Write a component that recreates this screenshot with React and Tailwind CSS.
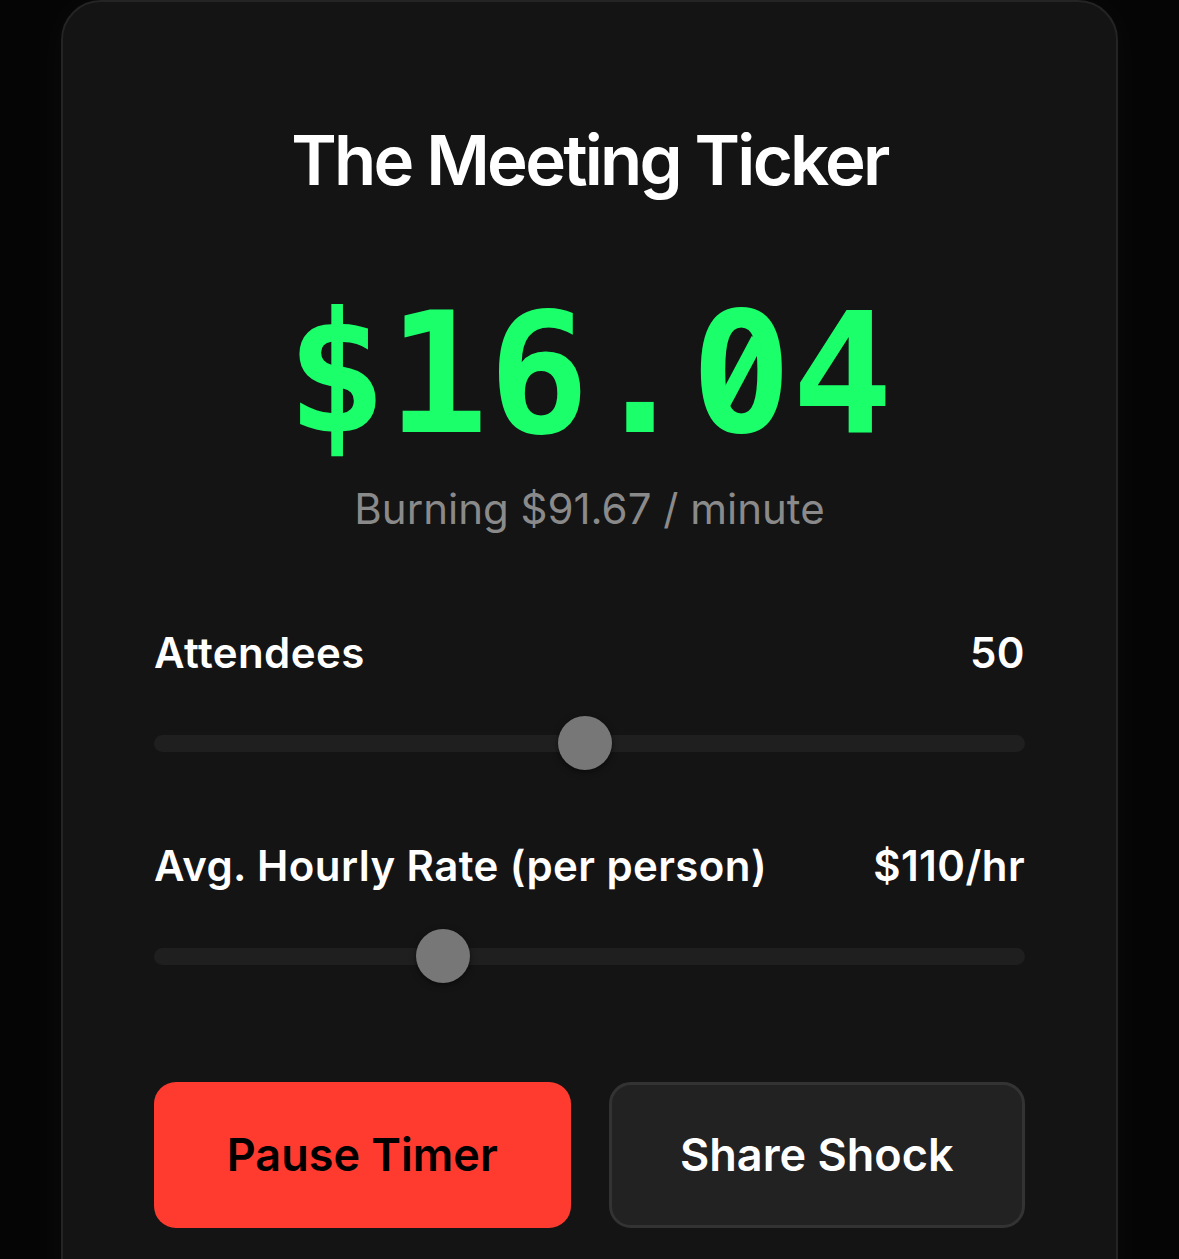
import React from "react";

function Slider({ pct }) {
  return (
    <div className="relative h-[54px] flex items-center">
      <div className="w-full h-[17px] rounded-full bg-[#1f1f1f]" />
      <div
        className="absolute top-0 w-[54px] h-[54px] rounded-full bg-[#777777] shadow-[0_2px_6px_rgba(0,0,0,0.5)]"
        style={{ left: `calc((100% - 54px) * ${pct})` }}
      />
    </div>
  );
}

function SlashedZero() {
  return (
    <span className="relative inline-block">
      0
      <span className="absolute left-1/2 top-[72px] -translate-x-1/2 -translate-y-1/2 w-[30px] h-[46px] rounded-full bg-[#141414]" />
      <span className="absolute left-1/2 top-[72px] -translate-x-1/2 -translate-y-1/2 w-[14px] h-[72px] bg-[#1aff6a] rotate-[28deg]" />
    </span>
  );
}

export default function App() {
  return (
    <div
      className="w-[1179px] h-[1259px] overflow-hidden bg-[#050505] flex justify-center"
      style={{ fontFamily: "Inter, 'Noto Sans', sans-serif" }}
    >
      <div className="w-[1057px] h-[1320px] bg-[#141414] border-2 border-[#242424] rounded-[40px] shadow-[0_0_40px_rgba(255,255,255,0.03)] px-[91px] pt-[118px] flex flex-col">
        <h1 className="text-center text-white text-[69px] leading-[80px] font-semibold tracking-[-0.04em]">
          The Meeting Ticker
        </h1>
        <div
          className="mt-[99px] text-center text-[#1aff6a] text-[168px] leading-[150px] font-bold"
          style={{ fontFamily: "'DejaVu Sans Mono', monospace" }}
        >
          $16.
          <SlashedZero />4
        </div>
        <div className="mt-[35px] text-center text-[#8a8a8a] text-[42px] leading-[50px]">
          Burning $91.67 / minute
        </div>

        <div className="mt-[94px] flex justify-between items-center text-white text-[42px] leading-[50px] font-semibold tracking-[0.01em]">
          <span>Attendees</span>
          <span>50</span>
        </div>
        <div className="mt-[38px]">
          <Slider pct={0.494} />
        </div>

        <div className="mt-[71px] flex justify-between items-center text-white text-[42px] leading-[50px] font-semibold tracking-[0.01em]">
          <span>Avg. Hourly Rate (per person)</span>
          <span>$110/hr</span>
        </div>
        <div className="mt-[38px]">
          <Slider pct={0.321} />
        </div>

        <div className="mt-[99px] grid grid-cols-2 gap-[38px]">
          <button className="h-[146px] rounded-[22px] bg-[#ff3b30] text-black text-[45px] font-semibold">
            Pause Timer
          </button>
          <button className="h-[146px] rounded-[22px] bg-[#222222] border-[3px] border-[#333333] text-white text-[45px] font-semibold">
            Share Shock
          </button>
        </div>
      </div>
    </div>
  );
}
